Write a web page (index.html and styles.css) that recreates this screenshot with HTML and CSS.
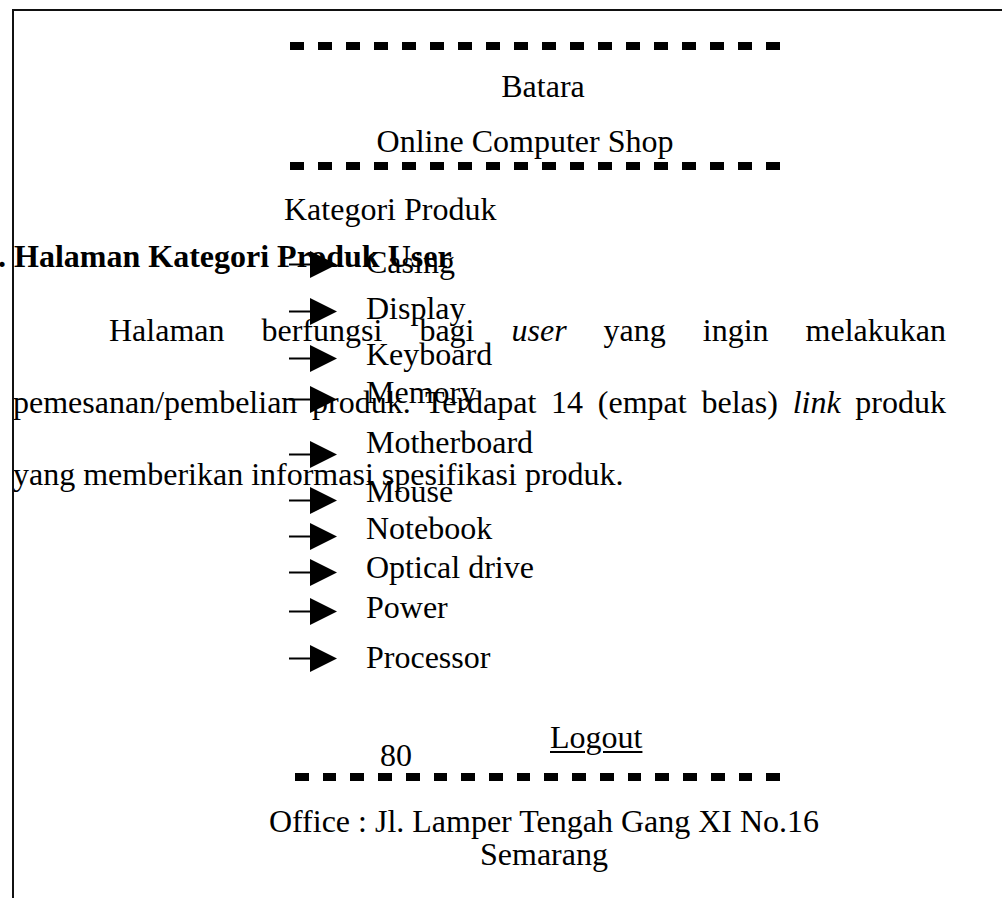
FILE: index.html
```html
<!DOCTYPE html>
<html lang="id">
<head>
  <meta charset="UTF-8">
  <title>Halaman Kategori Produk User</title>
  <link rel="stylesheet" href="styles.css">
</head>
<body>

  <div class="page">

    <div class="doc">
      <h2 class="judul">. Halaman Kategori Produk User</h2>
      <p class="paragraf">Halaman berfungsi bagi <i>user</i> yang ingin melakukan pemesanan/pembelian produk. Terdapat 14 (empat belas) <i>link</i> produk yang memberikan informasi spesifikasi produk.</p>
      <div class="nomor">80</div>
    </div>

    <div class="gambar">
      <div class="isi">
        <div class="garis">
          <span></span><span></span><span></span><span></span><span></span><span></span>
          <span></span><span></span><span></span><span></span><span></span><span></span>
          <span></span><span></span><span></span><span></span><span></span><span></span>
        </div>
        <div class="nama">Batara</div>
        <div class="toko">Online Computer Shop</div>
        <div class="garis">
          <span></span><span></span><span></span><span></span><span></span><span></span>
          <span></span><span></span><span></span><span></span><span></span><span></span>
          <span></span><span></span><span></span><span></span><span></span><span></span>
        </div>

        <div class="kategori">Kategori Produk</div>
        <ul class="daftar">
          <li><svg class="panah" viewBox="0 0 50 27"><line x1="0" y1="13.5" x2="24" y2="13.5"/><polygon points="21,0 48,13.5 21,27"/></svg><span>Casing</span></li>
          <li><svg class="panah" viewBox="0 0 50 27"><line x1="0" y1="13.5" x2="24" y2="13.5"/><polygon points="21,0 48,13.5 21,27"/></svg><span>Display</span></li>
          <li><svg class="panah" viewBox="0 0 50 27"><line x1="0" y1="13.5" x2="24" y2="13.5"/><polygon points="21,0 48,13.5 21,27"/></svg><span>Keyboard</span></li>
          <li><svg class="panah" viewBox="0 0 50 27"><line x1="0" y1="13.5" x2="24" y2="13.5"/><polygon points="21,0 48,13.5 21,27"/></svg><span>Memory</span></li>
          <li><svg class="panah" viewBox="0 0 50 27"><line x1="0" y1="13.5" x2="24" y2="13.5"/><polygon points="21,0 48,13.5 21,27"/></svg><span>Motherboard</span></li>
          <li><svg class="panah" viewBox="0 0 50 27"><line x1="0" y1="13.5" x2="24" y2="13.5"/><polygon points="21,0 48,13.5 21,27"/></svg><span>Mouse</span></li>
          <li><svg class="panah" viewBox="0 0 50 27"><line x1="0" y1="13.5" x2="24" y2="13.5"/><polygon points="21,0 48,13.5 21,27"/></svg><span>Notebook</span></li>
          <li><svg class="panah" viewBox="0 0 50 27"><line x1="0" y1="13.5" x2="24" y2="13.5"/><polygon points="21,0 48,13.5 21,27"/></svg><span>Optical drive</span></li>
          <li><svg class="panah" viewBox="0 0 50 27"><line x1="0" y1="13.5" x2="24" y2="13.5"/><polygon points="21,0 48,13.5 21,27"/></svg><span>Power</span></li>
          <li><svg class="panah" viewBox="0 0 50 27"><line x1="0" y1="13.5" x2="24" y2="13.5"/><polygon points="21,0 48,13.5 21,27"/></svg><span>Processor</span></li>
        </ul>

        <a class="logout" href="#">Logout</a>

        <div class="garis bawah">
          <span></span><span></span><span></span><span></span><span></span><span></span>
          <span></span><span></span><span></span><span></span><span></span><span></span>
          <span></span><span></span><span></span><span></span><span></span><span></span>
        </div>
        <div class="alamat">Office : Jl. Lamper Tengah Gang XI No.16<br>Semarang</div>
      </div>
    </div>

  </div>

</body>
</html>
```

FILE: styles.css
```css
html, body {
  margin: 0;
  padding: 0;
  background: #fff;
  overflow: hidden;
}

body {
  font-family: "Liberation Serif", "Times New Roman", serif;
  font-size: 32px;
  color: #000;
}

.page {
  position: relative;
  width: 1002px;
  height: 898px;
  overflow: hidden;
}

/* teks dokumen di belakang gambar */
.doc {
  padding-top: 236px;
}

.judul {
  margin: 0 0 0 -2px;
  font-size: 32px;
  line-height: 40px;
  font-weight: bold;
  white-space: nowrap;
}

.paragraf {
  margin: 18px 0 0 13px;
  width: 933px;
  line-height: 72px;
  text-align: justify;
  text-indent: 96px;
}

.nomor {
  margin: 227px 0 0 380px;
  line-height: 36px;
}

/* gambar halaman web (menimpa teks) */
.gambar {
  position: absolute;
  left: 12px;
  top: 9px;
  right: -40px;
  bottom: -40px;
  border-left: 2px solid #111;
  border-top: 2px solid #111;
  line-height: 36px;
}

.isi {
  margin-left: 276px;
  width: 490px;
  padding-top: 31px;
  text-align: center;
}

.garis {
  display: flex;
  gap: 14px;
  height: 8px;
}

.garis span {
  width: 14px;
  height: 8px;
  background: #000;
}

.garis.bawah {
  margin: 18px 0 0 5px;
}

.nama {
  margin-top: 18px;
  padding-left: 16px;
}

.toko {
  margin-top: 19px;
  padding-right: 20px;
  white-space: nowrap;
}

.toko + .garis {
  margin-top: 3px;
}

.kategori {
  margin-top: 21px;
  margin-left: -6px;
  text-align: left;
}

.daftar {
  list-style: none;
  margin: 17px 0 0 -1px;
  padding: 0;
  text-align: left;
}

.daftar li {
  display: flex;
  align-items: flex-start;
  height: 42px;
}

.daftar li span {
  margin-left: 27px;
  white-space: nowrap;
}

.panah {
  width: 50px;
  height: 27px;
  flex-shrink: 0;
}

.panah line {
  stroke: #000;
  stroke-width: 2;
}

.panah polygon {
  fill: #000;
}

.daftar li:nth-child(1) { height: 46px; }
.daftar li:nth-child(1) .panah { margin-top: 7px; }
.daftar li:nth-child(2) { height: 46px; }
.daftar li:nth-child(2) .panah { margin-top: 8px; }
.daftar li:nth-child(3) { height: 38px; }
.daftar li:nth-child(3) .panah { margin-top: 9px; }
.daftar li:nth-child(4) { height: 50px; }
.daftar li:nth-child(4) .panah { margin-top: 12px; }
.daftar li:nth-child(5) { height: 49px; }
.daftar li:nth-child(5) .panah { margin-top: 17px; }
.daftar li:nth-child(6) { height: 37px; }
.daftar li:nth-child(6) .panah { margin-top: 14px; }
.daftar li:nth-child(7) { height: 39px; }
.daftar li:nth-child(7) .panah { margin-top: 13px; }
.daftar li:nth-child(8) { height: 40px; }
.daftar li:nth-child(8) .panah { margin-top: 10px; }
.daftar li:nth-child(9) { height: 50px; }
.daftar li:nth-child(9) .panah { margin-top: 9px; }
.daftar li:nth-child(10) { height: 36px; }
.daftar li:nth-child(10) .panah { margin-top: 6px; }

.logout {
  display: block;
  margin-top: 44px;
  padding-left: 260px;
  text-align: left;
  color: #000;
  text-decoration: underline;
  text-decoration-thickness: 1.5px;
  text-underline-offset: 3px;
}

.alamat {
  margin: 24px -58px 0 -40px;
  line-height: 33px;
  white-space: nowrap;
}
```
